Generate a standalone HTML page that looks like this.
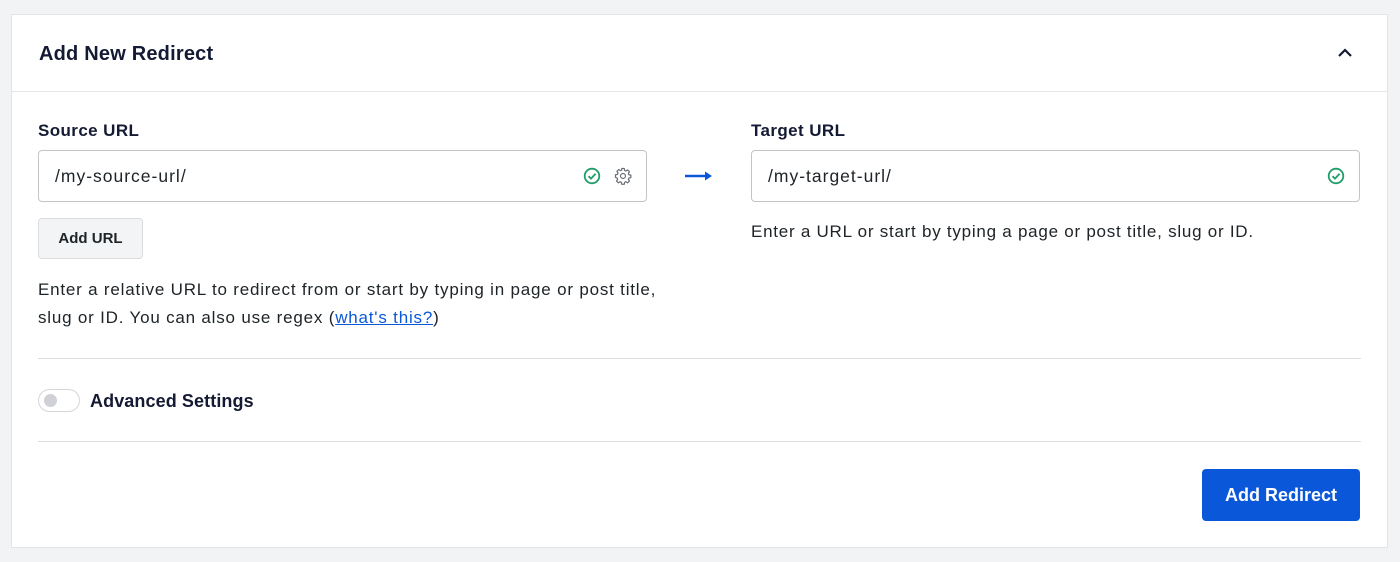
<!DOCTYPE html>
<html><head><style>
*{box-sizing:border-box;margin:0;padding:0}
body{width:1400px;height:562px;background:#f2f3f5;font-family:"Liberation Sans",Arial,sans-serif;color:#1d2327;position:relative;overflow:hidden}
.card{position:absolute;left:11px;top:14px;width:1377px;height:534px;background:#fff;border:1px solid #e2e4e7}
.a{position:absolute}
.title{left:27px;top:26px;font-size:20px;font-weight:bold;color:#141a33;line-height:26px;letter-spacing:0.2px}
.hr{position:absolute;height:1px;background:#dcdcde}
.lbl{font-size:17px;font-weight:bold;color:#141a33;line-height:22px;letter-spacing:0.4px}
.inp{height:52px;border:1px solid #c3c4c7;border-radius:4px;font-size:17.5px;line-height:50px;padding-left:16px;color:#1d2327;letter-spacing:1px}
.help{font-size:17px;line-height:28px;color:#1d2327;letter-spacing:0.8px;white-space:nowrap}
a{color:#0a58d9}
</style></head><body>
<div class="card">
<div class="a title">Add New Redirect</div>
<svg class="a" style="left:1324px;top:31px" width="18" height="14" viewBox="0 0 18 14"><path d="M3 10 L9 4 L15 10" fill="none" stroke="#141a33" stroke-width="2.2"/></svg>
<div class="hr" style="left:0;top:76px;width:1375px;background:#e6e7e9"></div>

<div class="a lbl" style="left:26px;top:105px">Source URL</div>
<div class="a inp" style="left:26px;top:135px;width:609px">/my-source-url/</div>
<svg class="a" style="left:571px;top:152px" width="18" height="18" viewBox="0 0 18 18"><circle cx="9" cy="9" r="7.3" fill="none" stroke="#1f9d6b" stroke-width="1.8"/><path d="M5.5 9.2 L8 11.6 L12.6 6.8" fill="none" stroke="#1f9d6b" stroke-width="1.8"/></svg>
<svg class="a" style="left:602px;top:152px" width="18" height="18" viewBox="0 0 24 24"><path d="M10.3 2h3.4l.5 2.6 1.8.8 2.2-1.5 2.4 2.4-1.5 2.2.8 1.8 2.6.5v3.4l-2.6.5-.8 1.8 1.5 2.2-2.4 2.4-2.2-1.5-1.8.8-.5 2.6h-3.4l-.5-2.6-1.8-.8-2.2 1.5-2.4-2.4 1.5-2.2-.8-1.8L2 13.7v-3.4l2.6-.5.8-1.8-1.5-2.2 2.4-2.4 2.2 1.5 1.8-.8z" fill="none" stroke="#6b6f75" stroke-width="1.6" stroke-linejoin="round"/><circle cx="12" cy="12" r="3.3" fill="none" stroke="#6b6f75" stroke-width="1.6"/></svg>
<svg class="a" style="left:672px;top:154px" width="30" height="14" viewBox="0 0 30 14"><path d="M1 7 H24" stroke="#0a58d9" stroke-width="2.4"/><path d="M21 2.5 L28 7 L21 11.5Z" fill="#0a58d9"/></svg>

<div class="a lbl" style="left:739px;top:105px">Target URL</div>
<div class="a inp" style="left:739px;top:135px;width:609px">/my-target-url/</div>
<svg class="a" style="left:1315px;top:152px" width="18" height="18" viewBox="0 0 18 18"><circle cx="9" cy="9" r="7.3" fill="none" stroke="#1f9d6b" stroke-width="1.8"/><path d="M5.5 9.2 L8 11.6 L12.6 6.8" fill="none" stroke="#1f9d6b" stroke-width="1.8"/></svg>
<div class="a help" style="left:739px;top:203px;letter-spacing:0.75px">Enter a URL or start by typing a page or post title, slug or ID.</div>

<div class="a" style="left:26px;top:203px;width:105px;height:41px;background:#f3f4f5;border:1px solid #dcdcde;border-radius:4px;font-size:15px;font-weight:bold;line-height:39px;text-align:center;color:#1d2327">Add URL</div>
<div class="a help" style="left:26px;top:261px">Enter a relative URL to redirect from or start by typing in page or post title,<br>slug or ID. You can also use regex (<a href="#">what's this?</a>)</div>

<div class="hr" style="left:26px;top:343px;width:1323px"></div>
<div class="a" style="left:26px;top:374px;width:42px;height:23px;border:1px solid #d5d6d9;border-radius:12px;background:#fff"><div style="position:absolute;left:5px;top:4px;width:13px;height:13px;border-radius:50%;background:#d0d1d6"></div></div>
<div class="a" style="left:78px;top:375px;font-size:18px;font-weight:bold;color:#141a33;line-height:22px;letter-spacing:0.1px">Advanced Settings</div>
<div class="hr" style="left:26px;top:426px;width:1323px"></div>

<div class="a" style="left:1190px;top:454px;width:158px;height:52px;background:#0a58d9;border-radius:4px;color:#fff;font-size:18px;font-weight:bold;line-height:52px;text-align:center">Add Redirect</div>
</div>
</body></html>
